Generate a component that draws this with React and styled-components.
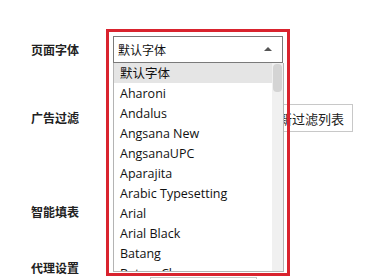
import React from 'react';
import styled, { createGlobalStyle } from 'styled-components';

const GlobalStyle = createGlobalStyle`
  html, body {
    margin: 0;
    padding: 0;
    background: #ffffff;
  }
  body {
    font-family: "Open Sans", "Noto Sans CJK SC", sans-serif;
    color: #1a1a1a;
    overflow: hidden;
  }
`;

const Page = styled.div`
  width: 380px;
  height: 279px;
  padding: 36px 0 0 31px;
  box-sizing: border-box;
  display: flex;
  flex-direction: column;
  overflow: hidden;
`;

const Row = styled.div`
  display: flex;
  flex-shrink: 0;
  align-items: ${p => p.$align || 'center'};
  height: ${p => p.$height}px;
  margin-top: ${p => p.$top || 0}px;
`;

const Label = styled.div`
  width: 82px;
  flex-shrink: 0;
  font-family: "Noto Sans CJK SC", sans-serif;
  font-weight: 700;
  font-size: 12px;
  line-height: 20px;
  color: #222;
`;

const Control = styled.div`
  position: relative;
  display: flex;
  align-items: center;
  margin-left: ${p => p.$left || 0}px;
`;

const SelectBox = styled.div`
  width: 170px;
  height: 27px;
  box-sizing: border-box;
  border: 1px solid #7a7a7a;
  background: #fff;
  display: flex;
  align-items: center;
  justify-content: space-between;
  padding: 0 10px 0 4px;
  font-size: 12px;
  font-family: "Noto Sans CJK SC", sans-serif;
  color: #111;
`;

const Arrow = styled.span`
  width: 0;
  height: 0;
  border-left: 4px solid transparent;
  border-right: 4px solid transparent;
  border-bottom: 4px solid #555;
  margin-top: -1px;
`;

const Frame = styled.div`
  position: absolute;
  left: -7px;
  top: -7px;
  width: 184px;
  height: 247px;
  box-sizing: border-box;
  border: 3px solid #d9232e;
  pointer-events: none;
  z-index: 3;
`;

const List = styled.div`
  position: absolute;
  left: 0;
  top: 27px;
  width: 171px;
  height: 209px;
  box-sizing: border-box;
  border: 1px solid #b4b4b4;
  border-top: none;
  background: #fff;
  display: flex;
  overflow: hidden;
  z-index: 2;
`;

const Options = styled.div`
  flex: 1;
  overflow: hidden;
`;

const Option = styled.div`
  height: 20px;
  line-height: 21px;
  padding-left: 6px;
  font-size: 12.5px;
  color: #111;
  white-space: nowrap;
  background: ${p => (p.$active ? '#e5e5e5' : 'transparent')};
`;

const Track = styled.div`
  width: 11px;
  background: #f0f0f0;
  padding: 1px 1px 0 1px;
  box-sizing: border-box;
`;

const Thumb = styled.div`
  height: 28px;
  border-radius: 4px;
  background: #d4d4d4;
`;

const Button = styled.div`
  height: 28px;
  box-sizing: border-box;
  border: 1px solid #c8c8c8;
  background: #fff;
  padding: 0 8px 0 9px;
  display: flex;
  align-items: center;
  font-family: "Noto Sans CJK SC", sans-serif;
  font-size: 13px;
  color: #222;
`;

const ProxyBox = styled.div`
  width: 107px;
  height: 24px;
  box-sizing: border-box;
  border: 1px solid #c8c8c8;
  margin-top: 19px;
`;

const fonts = [
  '默认字体',
  'Aharoni',
  'Andalus',
  'Angsana New',
  'AngsanaUPC',
  'Aparajita',
  'Arabic Typesetting',
  'Arial',
  'Arial Black',
  'Batang',
  'BatangChe',
];

export default function App() {
  return (
    <>
      <GlobalStyle />
      <Page>
        <Row $height={27}>
          <Label>页面字体</Label>
          <Control>
            <SelectBox>
              默认字体
              <Arrow />
            </SelectBox>
            <List>
              <Options>
                {fonts.map((f, i) => (
                  <Option key={f} $active={i === 0}>{f}</Option>
                ))}
              </Options>
              <Track>
                <Thumb />
              </Track>
            </List>
            <Frame />
          </Control>
        </Row>
        <Row $height={28} $top={41}>
          <Label>广告过滤</Label>
          <Control $left={143}>
            <Button>更新过滤列表</Button>
          </Control>
        </Row>
        <Row $height={20} $top={70}>
          <Label>智能填表</Label>
        </Row>
        <Row $height={40} $top={36} $align="flex-start">
          <Label>代理设置</Label>
          <Control $left={37}>
            <ProxyBox />
          </Control>
        </Row>
      </Page>
    </>
  );
}
